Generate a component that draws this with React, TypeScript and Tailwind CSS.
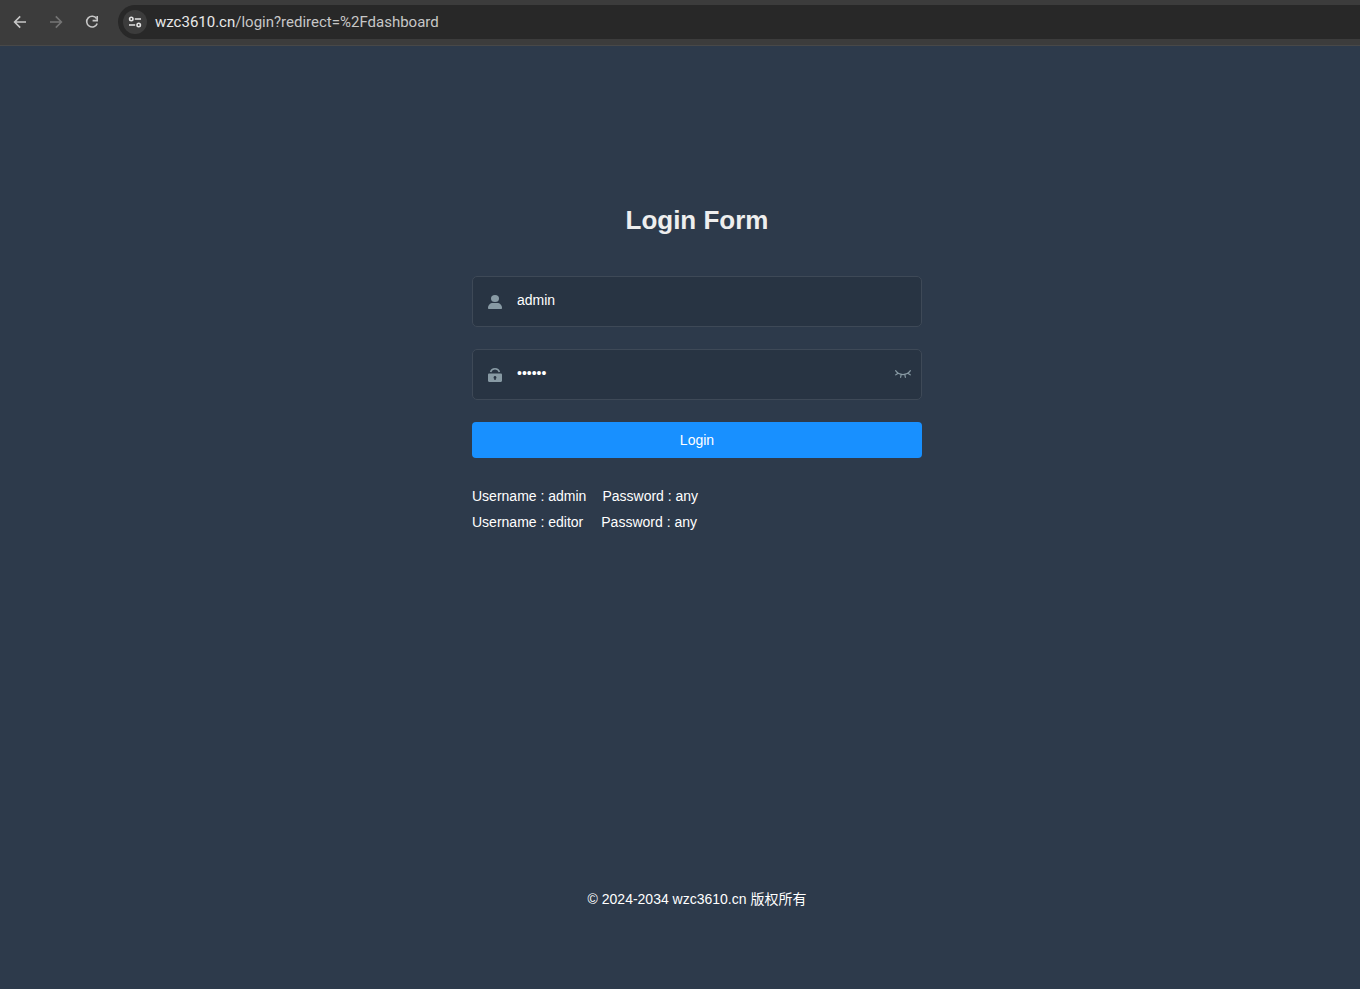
import { useState } from "react";

const ACCOUNTS = [
  { username: "admin", password: "any", gap: "gap-4" },
  { username: "editor", password: "any", gap: "gap-[18px]" },
];

function BrowserBar() {
  return (
    <header className="flex h-[46px] items-center border-b border-[#484848] bg-[#3c3c3c] pb-0.5 pl-3 font-['Roboto','Noto_Sans',sans-serif]">
      <nav className="flex gap-5">
        <button type="button" aria-label="Back" className="text-[#c7c7c7]">
          <svg className="size-4" viewBox="0 0 16 16" fill="none" stroke="currentColor" strokeWidth="1.6">
            <path d="M14 8H3M8.2 2.4 2.6 8l5.6 5.6" />
          </svg>
        </button>
        <button type="button" aria-label="Forward" disabled className="text-[#757575]">
          <svg className="size-4" viewBox="0 0 16 16" fill="none" stroke="currentColor" strokeWidth="1.6">
            <path d="M2 8h11M7.8 2.4 13.4 8l-5.6 5.6" />
          </svg>
        </button>
        <button type="button" aria-label="Reload" className="text-[#c7c7c7]">
          <svg className="size-4" viewBox="0 0 16 16" fill="none" stroke="currentColor" strokeWidth="1.6">
            <path d="M12.6 4.6A5.4 5.4 0 1 0 13.2 9.4" />
            <path d="M13.2 2v4.6H8.6" />
          </svg>
        </button>
      </nav>
      <div className="ml-[18px] flex h-[34px] flex-1 items-center gap-2 rounded-l-full bg-[#282828] pl-[5px]">
        <button
          type="button"
          aria-label="Site information"
          className="flex size-6 items-center justify-center rounded-full bg-[#3c3c3c] text-[#e3e3e3]"
        >
          <svg className="size-4" viewBox="0 0 16 16" fill="none" stroke="currentColor" strokeWidth="1.6">
            <circle cx="4.3" cy="5" r="1.7" />
            <path d="M7.8 5h6.2M2 11h6.2" />
            <circle cx="11.7" cy="11" r="1.7" />
          </svg>
        </button>
        <p className="text-[15px] leading-5 text-[#c7c7c7]">
          <span className="text-[#e8e8e8]">wzc3610.cn</span>/login?redirect=%2Fdashboard
        </p>
      </div>
    </header>
  );
}

function UserIcon() {
  return (
    <svg className="size-[14px]" viewBox="0 0 14 14" fill="currentColor">
      <ellipse cx="7" cy="3.5" rx="4" ry="3.5" />
      <path d="M0 13.2C0 10 2 8 5 8h4c3 0 5 2 5 5.2 0 .5-.3.8-.8.8H.8c-.5 0-.8-.3-.8-.8z" />
    </svg>
  );
}

function LockIcon() {
  return (
    <svg className="size-[14px]" viewBox="0 0 14 14">
      <path d="M2.6 4C3.2 1.8 5 .8 7 .8s3.8 1 4.4 3.2" fill="none" stroke="currentColor" strokeWidth="1.6" />
      <path
        fill="currentColor"
        fillRule="evenodd"
        d="M1.2 5.5h11.6c.7 0 1.2.5 1.2 1.2v6.1c0 .7-.5 1.2-1.2 1.2H1.2C.5 14 0 13.5 0 12.8V6.7c0-.7.5-1.2 1.2-1.2zM7 8a1.5 1.5 0 0 0-.7 2.8V12h1.4v-1.2A1.5 1.5 0 0 0 7 8z"
      />
    </svg>
  );
}

function EyeIcon({ open }: { open: boolean }) {
  return (
    <svg className="h-2 w-4" viewBox="0 0 16 8" fill="none" stroke="currentColor" strokeWidth="1.2" strokeLinecap="round">
      {open ? (
        <>
          <path d="M.6 4C4 0 12 0 15.4 4 12 8 4 8 .6 4z" />
          <circle cx="8" cy="4" r="1.6" />
        </>
      ) : (
        <path d="M.6.7C4 5.8 12 5.8 15.4.7M3.2 3.2.8 4.8M12.8 3.2l2.4 1.6M6.2 4.7l-.6 2.6M9.8 4.7l.6 2.6" />
      )}
    </svg>
  );
}

export default function App() {
  const [username, setUsername] = useState("admin");
  const [password, setPassword] = useState("111111");
  const [showPassword, setShowPassword] = useState(false);

  return (
    <div className="flex min-h-screen flex-col bg-[#2d3a4b] font-['Liberation_Sans','Noto_Sans_CJK_SC',sans-serif] text-sm text-white">
      <BrowserBar />

      <main className="flex flex-1 flex-col items-center pl-[34px]">
        <form onSubmit={(e) => e.preventDefault()} className="mt-[159px] w-full max-w-[450px]">
          <h1 className="mb-[41px] text-center text-[26px] leading-[30px] font-bold text-[#eee]">
            Login Form
          </h1>

          {/* Username */}
          <div className="mb-[22px] flex h-[51px] items-center rounded-[5px] border border-[#3e4957] bg-[#283443]">
            <label htmlFor="username" aria-label="Username" className="pl-[15px] text-[#889aa4]">
              <UserIcon />
            </label>
            <input
              id="username"
              type="text"
              value={username}
              onChange={(e) => setUsername(e.target.value)}
              placeholder="Username"
              className="h-[47px] min-w-0 flex-1 bg-transparent pr-[15px] pb-1 pl-[15px] outline-none"
            />
          </div>

          {/* Password */}
          <div className="mb-[22px] flex h-[51px] items-center rounded-[5px] border border-[#3e4957] bg-[#283443]">
            <label htmlFor="password" aria-label="Password" className="pl-[15px] text-[#889aa4]">
              <LockIcon />
            </label>
            <input
              id="password"
              type={showPassword ? "text" : "password"}
              value={password}
              onChange={(e) => setPassword(e.target.value)}
              placeholder="Password"
              className="h-[47px] min-w-0 flex-1 bg-transparent pr-[15px] pb-1 pl-[15px] outline-none"
            />
            <button
              type="button"
              aria-label="Toggle password visibility"
              onClick={() => setShowPassword(!showPassword)}
              className="mr-[10px] pb-0.5 text-[#889aa4]"
            >
              <EyeIcon open={showPassword} />
            </button>
          </div>

          <button type="submit" className="h-9 w-full rounded bg-[#1890ff] hover:bg-[#46a6ff]">
            Login
          </button>

          <div className="mt-[25px] leading-[26px]">
            {ACCOUNTS.map((account) => (
              <p key={account.username} className={`flex ${account.gap}`}>
                <span>Username : {account.username}</span>
                <span>Password : {account.password}</span>
              </p>
            ))}
          </div>
        </form>

        <footer className="mt-auto mb-20 leading-5">© 2024-2034 wzc3610.cn 版权所有</footer>
      </main>
    </div>
  );
}
